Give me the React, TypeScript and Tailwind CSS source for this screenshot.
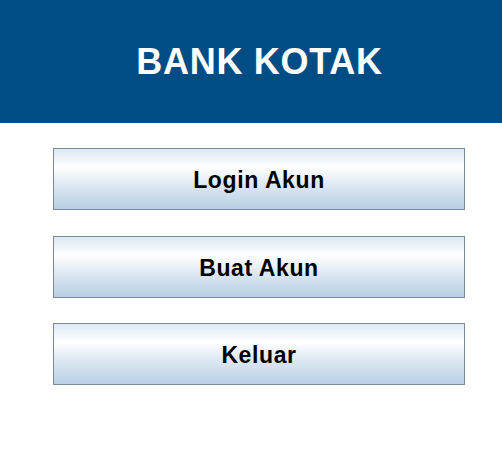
import React from "react";

const buttons = [
  { label: "Login Akun", cls: "" },
  { label: "Buat Akun", cls: "mt-[26px]" },
  { label: "Keluar", cls: "mt-[25px]" },
];

export default function App() {
  return (
    <div className="w-[502px] h-[472px] overflow-hidden bg-white" style={{ fontFamily: '"Liberation Sans", Arial, sans-serif' }}>
      <div className="w-[518px]">
        <div className="h-[123px] bg-[#004d86] flex items-center justify-center">
          <h1 className="text-white font-bold text-[36px] leading-none tracking-[0.7px] pl-[1px] pt-[1px]">BANK KOTAK</h1>
        </div>
        <div className="flex flex-col items-center pt-[25px]">
          {buttons.map((b) => (
            <button
              key={b.label}
              className={`${b.cls} w-[412px] h-[62px] border border-[#7a8a99] bg-[linear-gradient(to_bottom,#dde8f3_0%,#ffffff_30%,#dde8f3_60%,#b8cfe5_100%)] text-black font-bold text-[23px] tracking-[0.6px] pt-[3px] flex items-center justify-center`}
            >
              {b.label}
            </button>
          ))}
        </div>
      </div>
    </div>
  );
}
